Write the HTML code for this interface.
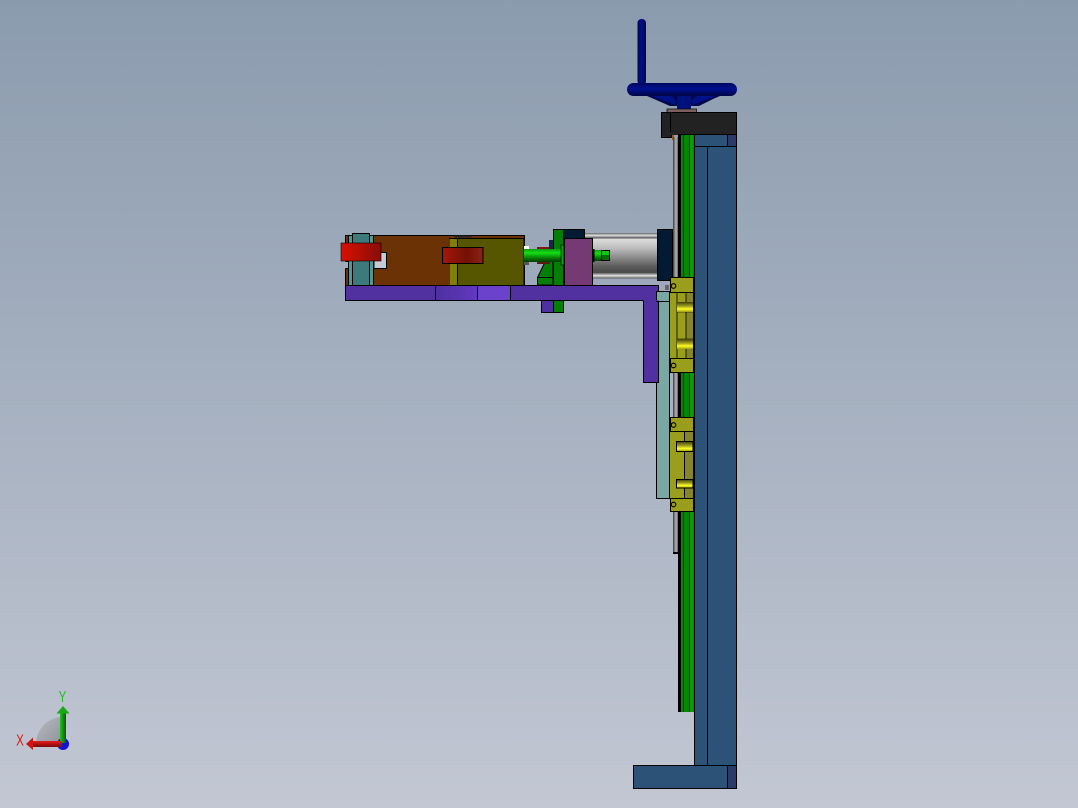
<!DOCTYPE html>
<html>
<head>
<meta charset="utf-8">
<style>
html,body{margin:0;padding:0;width:1078px;height:808px;overflow:hidden}
body{background:linear-gradient(180deg,#8b9bae 0%,#c2c7d3 100%)}
svg{position:absolute;left:0;top:0}
text{font-family:"Liberation Sans",sans-serif}
</style>
</head>
<body>
<svg width="1078" height="808" viewBox="0 0 1078 808" xmlns="http://www.w3.org/2000/svg">
<defs>
<linearGradient id="red" x1="0" x2="1" y1="0" y2="0"><stop offset="0" stop-color="#d81000"/><stop offset=".5" stop-color="#b00f04"/><stop offset="1" stop-color="#860d08"/></linearGradient>
<linearGradient id="red2" x1="0" x2="1" y1="0" y2="0"><stop offset="0" stop-color="#a5170b"/><stop offset=".6" stop-color="#741005"/><stop offset="1" stop-color="#8a2418"/></linearGradient>
<linearGradient id="rod" x1="0" x2="0" y1="0" y2="1"><stop offset="0" stop-color="#0c9a0c"/><stop offset=".3" stop-color="#16e016"/><stop offset=".7" stop-color="#067a06"/><stop offset="1" stop-color="#023c02"/></linearGradient>
<linearGradient id="cyl" x1="0" x2="0" y1="0" y2="1"><stop offset="0" stop-color="#e0e0e0"/><stop offset=".25" stop-color="#bdbdbd"/><stop offset=".7" stop-color="#5e5e5e"/><stop offset="1" stop-color="#363636"/></linearGradient>
<linearGradient id="tie" x1="0" x2="0" y1="0" y2="1"><stop offset="0" stop-color="#666"/><stop offset=".5" stop-color="#e0e0e0"/><stop offset="1" stop-color="#555"/></linearGradient>
<linearGradient id="screw" x1="0" x2="1" y1="0" y2="0"><stop offset="0" stop-color="#3a3a3a"/><stop offset=".5" stop-color="#b8b8b8"/><stop offset="1" stop-color="#333"/></linearGradient>
<linearGradient id="pin" x1="0" x2="0" y1="0" y2="1"><stop offset="0" stop-color="#3e3e0c"/><stop offset=".45" stop-color="#a8a820"/><stop offset=".7" stop-color="#ffff20"/><stop offset="1" stop-color="#9a9a18"/></linearGradient>
<linearGradient id="wheel" x1="0" x2="0" y1="0" y2="1"><stop offset="0" stop-color="#00085a"/><stop offset=".45" stop-color="#001090"/><stop offset="1" stop-color="#000642"/></linearGradient>
<linearGradient id="handle" x1="0" x2="1" y1="0" y2="0"><stop offset="0" stop-color="#00064a"/><stop offset=".45" stop-color="#00108a"/><stop offset="1" stop-color="#00064a"/></linearGradient>
<linearGradient id="triG" x1="0" x2="1" y1="0" y2="0"><stop offset="0" stop-color="#22c022"/><stop offset="1" stop-color="#045e04"/></linearGradient>
<linearGradient id="triR" x1="0" x2="0" y1="0" y2="1"><stop offset="0" stop-color="#e81c1c"/><stop offset="1" stop-color="#7a0808"/></linearGradient>
<linearGradient id="triQ" x1="0" x2="1" y1="0" y2="1"><stop offset="0" stop-color="#b8bbc2"/><stop offset="1" stop-color="#8f9198"/></linearGradient>
<linearGradient id="pur" x1="0" x2="1" y1="0" y2="0"><stop offset="0" stop-color="#4f2f9f"/><stop offset="1" stop-color="#6039bf"/></linearGradient>
</defs>

<!-- handwheel -->
<rect x="637.5" y="19" width="8.5" height="66" rx="4" fill="url(#handle)"/>
<path d="M647 96 L654 99 L670 106 L677 106 L677 109 L691 109 L691 106 L699 106 L713 99 L720 96 Z" fill="#00084c"/>
<path d="M652 96 L672 103.500 Q676 105.500 676 101 L672 96 Z M716 96 L696 103.500 Q692 105.500 692 101 L696 96 Z" fill="#001088"/>
<rect x="677" y="95" width="14" height="14" fill="#00107c"/>
<rect x="627" y="83" width="110" height="13" rx="6.5" fill="url(#wheel)"/>
<rect x="667" y="109" width="29.500" height="3.500" fill="#7d5f5f" stroke="#111" stroke-width=".8"/>

<!-- screw behind -->
<rect x="672" y="130" width="2" height="10" fill="#9c5b10"/>
<rect x="673" y="137" width="6" height="416" fill="url(#screw)"/>
<rect x="673" y="552" width="6" height="2" fill="#000"/>

<!-- rail -->
<rect x="678" y="134" width="16" height="578" fill="#058605"/>
<rect x="678" y="134" width="3" height="578" fill="#000"/>
<rect x="683" y="134" width="1" height="578" fill="#032c03"/>
<rect x="689" y="134" width="1" height="578" fill="#032c03"/>
<rect x="690" y="134" width="3" height="578" fill="#0a9c0a"/>

<!-- column -->
<rect x="694.500" y="134.500" width="42" height="631" fill="#2d5277" stroke="#000"/>
<path d="M707.500 147V765" stroke="#000" fill="none"/>
<path d="M694.500 146.500H736.500" stroke="#000" fill="none"/>
<rect x="727.500" y="134.500" width="9" height="12" fill="#293b66" stroke="#000"/>
<rect x="633.500" y="765.500" width="103" height="23" fill="#2d5277" stroke="#000"/>
<rect x="727.500" y="765.500" width="9" height="23" fill="#293b66" stroke="#000"/>

<!-- top block -->
<rect x="661.500" y="112.500" width="10" height="25" fill="#222" stroke="#000"/>
<rect x="670.500" y="112.500" width="66" height="22" fill="#222" stroke="#000"/>
<rect x="670" y="132" width="8" height="3" fill="#222"/>

<!-- teal plate -->
<rect x="656.500" y="291.500" width="13" height="207" fill="#79a7a3" stroke="#000"/>

<!-- brown block -->
<rect x="345.500" y="235.500" width="179" height="50" fill="#6b3305" stroke="#000"/>
<rect x="344" y="261.500" width="4" height="7" fill="#a0abbb"/>
<path d="M345.500 261.500H348M345.500 268.500H348" stroke="#000" fill="none"/>
<rect x="374" y="252.500" width="12.500" height="16" fill="#c5cad4" stroke="#000"/>

<!-- teal roller -->
<rect x="348.500" y="235.500" width="25" height="50" fill="#4b9a98" stroke="#000"/>
<rect x="352.500" y="233.500" width="17" height="54" fill="#3d7a7c" stroke="#000"/>

<!-- olive block -->
<rect x="454.500" y="235.500" width="17" height="2" fill="#222"/>
<rect x="454.500" y="289" width="17" height="2" fill="#222"/>
<rect x="449.500" y="238.500" width="74.500" height="50" fill="#565600" stroke="#000"/>
<rect x="449.500" y="238.500" width="7.500" height="50" fill="#7f7f0a"/>
<path d="M457.500 238.500V288.500" stroke="#000" fill="none"/>
<path d="M449.500 238.500H524M449.500 288.500H524" stroke="#000" fill="none"/>

<!-- red bars -->
<rect x="341" y="243" width="40" height="18" fill="url(#red)" stroke="#000" stroke-width=".6"/>
<rect x="442.500" y="247.500" width="40.500" height="16" fill="url(#red2)" stroke="#000"/>

<!-- green bracket -->
<path d="M537.500 277.500 L547 258 L553 258 L553 285 L537.500 285 Z" fill="#067e06" stroke="#000"/>
<path d="M537.500 277.500H553" stroke="#000"/>
<rect x="553.500" y="229.500" width="10" height="83" fill="#067e06" stroke="#000"/>
<rect x="541.500" y="300.500" width="12" height="12" fill="#5030a0" stroke="#000"/>
<rect x="524" y="246" width="5" height="4" fill="#fff"/>
<rect x="524" y="262" width="5" height="3" fill="#555"/>
<rect x="537" y="247" width="16" height="3" fill="#7b1a12"/>
<rect x="537" y="261" width="13" height="3" fill="#5b1a12"/>
<rect x="549" y="240" width="4" height="9" fill="#10284a"/>

<!-- cylinder -->
<rect x="585" y="238" width="73" height="40" fill="url(#cyl)"/>
<rect x="585" y="233" width="73" height="5" fill="url(#tie)"/>
<rect x="585" y="273" width="73" height="5.500" fill="url(#tie)"/>
<path d="M585 238.500H658M585 272.500H658" stroke="#555" stroke-width=".6"/>
<rect x="563.500" y="229.500" width="21" height="9" fill="#021a32" stroke="#000"/>
<rect x="657.500" y="229.500" width="15" height="51" fill="#021a32" stroke="#000"/>

<!-- magenta block -->
<rect x="564.500" y="238.500" width="28" height="47" fill="#753a73" stroke="#000"/>

<!-- rods -->
<rect x="524" y="249" width="37" height="13" fill="url(#rod)"/>
<rect x="561" y="245" width="3" height="20" fill="#0a9a0a" stroke="#000" stroke-width=".6"/>
<rect x="593" y="250" width="9" height="11" fill="url(#rod)"/>
<rect x="593" y="249" width="1.500" height="13" fill="#000"/>
<rect x="601.500" y="250.500" width="8" height="10" fill="#067006" stroke="#000"/>
<rect x="602" y="251" width="7" height="4" fill="#11c811"/>

<!-- purple plate -->
<path d="M345.500 285.500H658.500V382.500H643.500V300.500H345.500Z" fill="#51309f" stroke="#000"/>
<rect x="435.500" y="285.500" width="42" height="15" fill="url(#pur)" stroke="#000"/>
<rect x="477.500" y="285.500" width="33" height="15" fill="#6b42cc" stroke="#000"/>
<rect x="656.500" y="291.500" width="13" height="10" fill="#79a7a3" stroke="#000"/>
<rect x="643.500" y="300" width="15" height="1" fill="#51309f"/>
<rect x="665" y="285" width="4" height="5" fill="#6b6570"/>

<!-- carriage 1 -->
<rect x="669.500" y="291.500" width="24" height="67" fill="#9a9e1c" stroke="#000"/>
<rect x="686" y="292" width="7" height="66" fill="#85852a"/>
<path d="M677 292V358M686 292V358" stroke="#000" fill="none" stroke-width=".8"/>
<path d="M677 312H693M677 339H693" stroke="#000" stroke-width=".6"/>
<rect x="670.500" y="277.500" width="23" height="15" fill="#9a9e1c" stroke="#000"/>
<rect x="670.500" y="358.500" width="23" height="14" fill="#9a9e1c" stroke="#000"/>
<circle cx="673.500" cy="286" r="2.300" fill="none" stroke="#000" stroke-width="1.100"/>
<circle cx="673.500" cy="365.500" r="2.300" fill="none" stroke="#000" stroke-width="1.100"/>
<rect x="677" y="302" width="16" height="10" fill="url(#pin)"/>
<rect x="677" y="339" width="16" height="10" fill="url(#pin)"/>

<!-- carriage 2 -->
<rect x="669.500" y="431.500" width="24" height="67" fill="#9a9e1c" stroke="#000"/>
<rect x="684" y="432" width="9" height="66" fill="#85852a"/>
<path d="M684.500 432V498" stroke="#000" fill="none"/>
<rect x="670.500" y="417.500" width="23" height="14" fill="#9a9e1c" stroke="#000"/>
<rect x="670.500" y="498.500" width="23" height="13" fill="#9a9e1c" stroke="#000"/>
<circle cx="673.500" cy="425" r="2.300" fill="none" stroke="#000" stroke-width="1.100"/>
<circle cx="673.500" cy="504.500" r="2.300" fill="none" stroke="#000" stroke-width="1.100"/>
<rect x="676.500" y="441.500" width="16.500" height="10" fill="url(#pin)" stroke="#000"/>
<rect x="676.500" y="479.500" width="16.500" height="8.500" fill="url(#pin)" stroke="#000"/>
<rect x="693" y="277" width="2" height="96" fill="#000"/>
<rect x="693" y="417" width="2" height="95" fill="#000"/>

<!-- triad -->
<path d="M63 744 L36 744 A27 27 0 0 1 63 717 Z" fill="url(#triQ)"/>
<circle cx="63" cy="744" r="6" fill="#1212d0"/>
<rect x="60" y="713" width="6" height="30" fill="url(#triG)"/>
<path d="M63 706 L69.500 713.500 L56.500 713.500 Z" fill="#18a818"/>
<rect x="33" y="741" width="29" height="6" fill="url(#triR)"/>
<path d="M26 744 L33 737.500 L33 750 Z" fill="#d01414"/>
<text transform="translate(62.500 702) scale(.72 1)" font-size="16" fill="#20c020" text-anchor="middle">Y</text>
<text transform="translate(20 745.500) scale(.72 1)" font-size="16" fill="#e01818" text-anchor="middle">X</text>
</svg>
</body>
</html>
